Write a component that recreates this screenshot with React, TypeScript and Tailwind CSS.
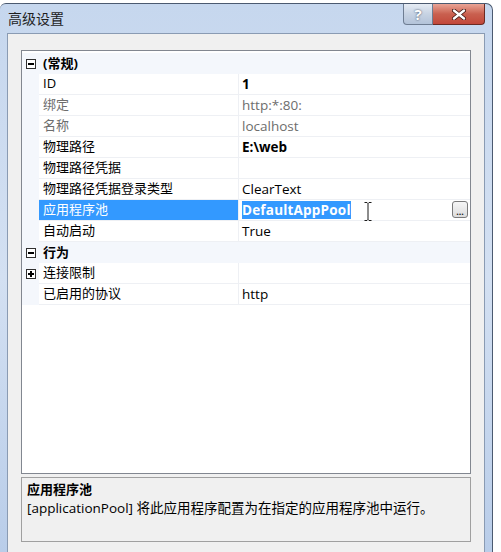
import React from "react";

type Row =
  | { kind: "cat"; label: string }
  | {
      kind: "prop";
      name: string;
      value?: string;
      dim?: boolean;
      bold?: boolean;
      selected?: boolean;
      expandable?: boolean;
    };

const rows: Row[] = [
  { kind: "cat", label: "(常规)" },
  { kind: "prop", name: "ID", value: "1", bold: true },
  { kind: "prop", name: "绑定", value: "http:*:80:", dim: true },
  { kind: "prop", name: "名称", value: "localhost", dim: true },
  { kind: "prop", name: "物理路径", value: "E:\\web", bold: true },
  { kind: "prop", name: "物理路径凭据", value: "" },
  { kind: "prop", name: "物理路径凭据登录类型", value: "ClearText" },
  { kind: "prop", name: "应用程序池", value: "DefaultAppPool", selected: true },
  { kind: "prop", name: "自动启动", value: "True" },
  { kind: "cat", label: "行为" },
  { kind: "prop", name: "连接限制", value: "", expandable: true },
  { kind: "prop", name: "已启用的协议", value: "http" },
];

const font = { fontFamily: '"Open Sans", "Noto Sans CJK SC", sans-serif' };

function Box({ plus }: { plus?: boolean }) {
  return (
    <span className="relative block w-[10px] h-[10px] border border-[#303030] bg-white">
      <span className="absolute left-[1px] top-[3px] w-[6px] h-[2px] bg-black" />
      {plus && <span className="absolute left-[3px] top-[1px] w-[2px] h-[6px] bg-black" />}
    </span>
  );
}

function GridRow({ row }: { row: Row }) {
  if (row.kind === "cat") {
    return (
      <div className="flex h-[21px] items-center bg-[#f4f7fc]">
        <div className="w-[17px] flex justify-center">
          <Box />
        </div>
        <div className="pl-[4px] text-[13px] font-bold text-black">{row.label}</div>
      </div>
    );
  }
  return (
    <div className="flex h-[21px]">
      <div className="w-[17px] bg-[#f4f7fc] flex items-center justify-center">
        {row.expandable && <Box plus />}
      </div>
      <div
        className={
          "w-[199px] flex items-center pl-[4px] text-[13px] border-b border-[#eef0f4] " +
          (row.selected ? "bg-[#3399ff] text-white border-[#3399ff]" : row.dim ? "text-[#6d6d6d]" : "text-black")
        }
      >
        {row.name}
      </div>
      <div className="w-[1px] bg-[#eef0f4]" />
      <div className="flex-1 flex items-center pl-[3px] text-[13.5px] border-b border-[#eef0f4] relative">
        {row.selected ? (
          <>
            <span className="bg-[#3399ff] text-white font-bold leading-[18px] tracking-[0.2px]">{row.value}</span>
            <svg className="absolute left-[125px] top-[2px]" width="8" height="19" viewBox="0 0 8 19">
              <path d="M0.5 0.5h2.5l1 1 1-1h2.5M4 1.5v16M0.5 18.5h2.5l1-1 1 1h2.5" stroke="#1a1a1a" strokeWidth="1" fill="none" />
            </svg>
            <span className="absolute right-[2px] top-[1px] w-[16px] h-[17px] rounded-[3px] border border-[#7a7a7a] bg-gradient-to-b from-[#f6f6f6] to-[#dcdcdc] flex items-end justify-center text-[9px] leading-[11px] font-bold text-[#222]">
              ...
            </span>
          </>
        ) : (
          <span className={row.bold ? "font-bold text-black" : row.dim ? "text-[#6d6d6d]" : "text-black"}>
            {row.value}
          </span>
        )}
      </div>
    </div>
  );
}

export default function App() {
  return (
    <div className="w-[501px] h-[552px] bg-white overflow-hidden" style={font}>
      <div className="mt-[3px] w-[493px] h-[549px] flex flex-col rounded-tl-[6px] rounded-tr-[7px] border-t border-r border-[#4b5a70] bg-gradient-to-b from-[#c6d7ee] via-[#d3e0f2] to-[#b9cde9]">
        {/* title bar */}
        <div className="h-[29px] flex items-start justify-between shrink-0">
          <div className="pl-[8px] pt-[5px] text-[14px] leading-[20px] text-[#1e1e1e]">高级设置</div>
          <div className="flex mr-[7px]">
            <div className="w-[30px] h-[21px] rounded-bl-[4px] border border-t-0 border-[#6e7d92] bg-gradient-to-b from-[#e6ecf4] via-[#c7d3e3] to-[#b3c3d9] flex items-center justify-center text-[15px] font-bold text-white [text-shadow:0_0_2px_#2c3a52]">
              ?
            </div>
            <div className="w-[52px] h-[21px] rounded-br-[4px] border border-t-0 border-l-0 border-[#6b2a22] bg-gradient-to-b from-[#e9a496] via-[#c9604f] to-[#c2473a] flex items-center justify-center">
              <svg width="14" height="11" viewBox="0 0 14 11">
                <path d="M2 1.5L12 9.5M12 1.5L2 9.5" stroke="#3b1410" strokeWidth="4" strokeLinecap="round" />
                <path d="M2 1.5L12 9.5M12 1.5L2 9.5" stroke="#ffffff" strokeWidth="2.4" strokeLinecap="round" />
              </svg>
            </div>
          </div>
        </div>
        {/* client */}
        <div className="flex-1 ml-[7px] mr-[7px] bg-[#f0f0f0] border-l border-t border-r border-[#8a9bb3] px-[13px] pt-[16px] flex flex-col">
          <div className="h-[424px] border border-[#828790] bg-white pt-[2px] flex flex-col">
            {rows.map((r, i) => (
              <GridRow key={i} row={r} />
            ))}
          </div>
          <div className="mt-[3px] h-[65px] border border-[#a0a0a0] bg-[#f0f0f0] px-[5px] pt-[1px]">
            <div className="text-[13px] leading-[20px] font-bold text-black">应用程序池</div>
            <div className="text-[13.5px] leading-[18px] text-black">
              [applicationPool] 将此应用程序配置为在指定的应用程序池中运行。
            </div>
          </div>
        </div>
      </div>
    </div>
  );
}
